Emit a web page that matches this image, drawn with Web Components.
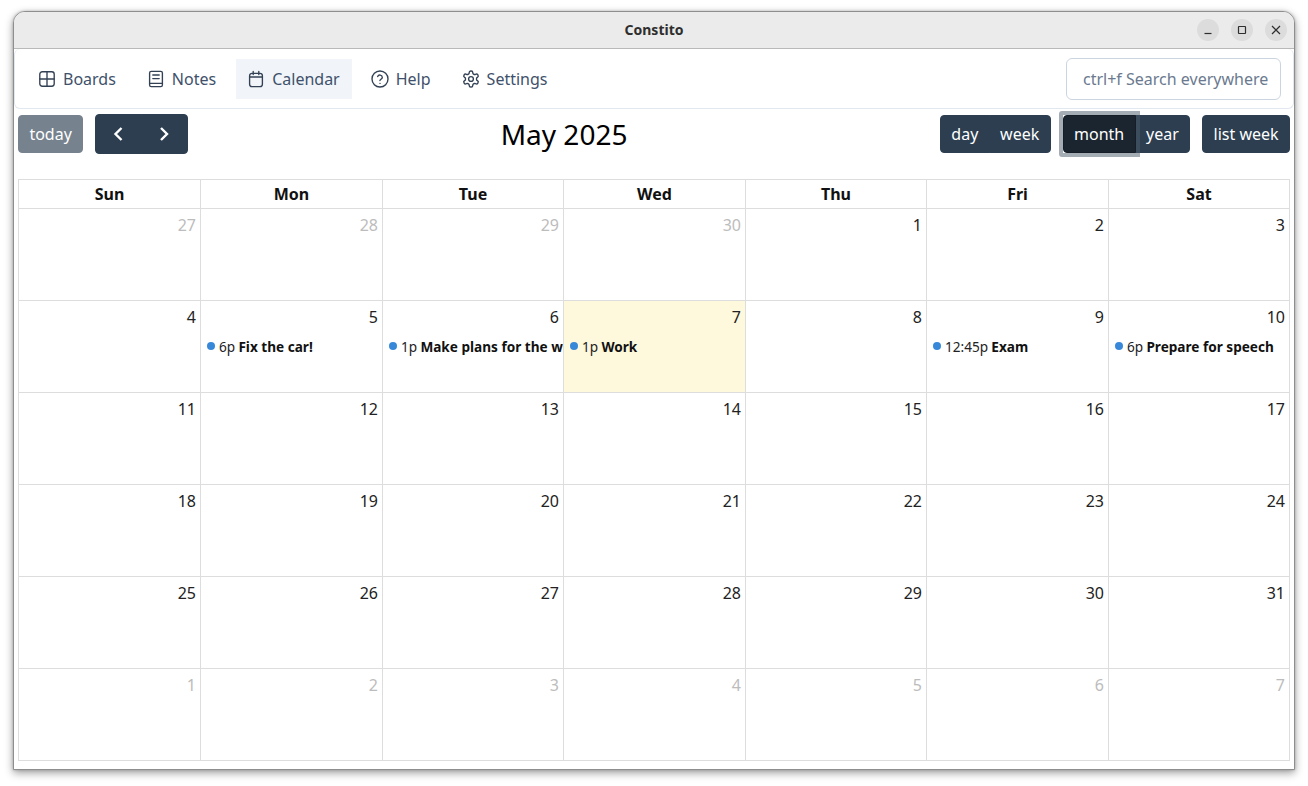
<!DOCTYPE html>
<html>
<head>
<meta charset="utf-8">
<title>Constito</title>
<style>
  html, body { margin: 0; background: #fff; }
  body { font-family: "Noto Sans", sans-serif; }
</style>
</head>
<body>
<app-window>
  <window-bar title-text="Constito"></window-bar>
  <nav-bar></nav-bar>
  <cal-page></cal-page>
</app-window>

<script>
const ICONS = {
  boards: `<rect x="3" y="3" width="18" height="18" rx="3"/><path d="M3 12h18M12 3v18"/>`,
  notes: `<path d="M6 2.5h12a2 2 0 0 1 2 2v15a2 2 0 0 1-2 2H6a2 2 0 0 1-2-2v-15a2 2 0 0 1 2-2z"/><path d="M4 17.5h16M8 7h8M8 11.5h8"/>`,
  calendar: `<rect x="4" y="5" width="16" height="16.5" rx="3"/><path d="M8.5 2.5v4M15.5 2.5v4M4 9.5h16"/>`,
  help: `<circle cx="12" cy="12" r="10"/><path d="M9.1 9a3 3 0 0 1 5.8 1c0 2-3 2.6-3 4"/><path d="M12 17.5h.01"/>`,
  settings: `<path d="M12.22 2h-.44a2 2 0 0 0-2 2v.18a2 2 0 0 1-1 1.73l-.43.25a2 2 0 0 1-2 0l-.15-.08a2 2 0 0 0-2.73.73l-.22.38a2 2 0 0 0 .73 2.73l.15.1a2 2 0 0 1 1 1.72v.51a2 2 0 0 1-1 1.74l-.15.09a2 2 0 0 0-.73 2.73l.22.38a2 2 0 0 0 2.73.73l.15-.08a2 2 0 0 1 2 0l.43.25a2 2 0 0 1 1 1.73V20a2 2 0 0 0 2 2h.44a2 2 0 0 0 2-2v-.18a2 2 0 0 1 1-1.73l.43-.25a2 2 0 0 1 2 0l.15.08a2 2 0 0 0 2.73-.73l.22-.39a2 2 0 0 0-.73-2.73l-.15-.08a2 2 0 0 1-1-1.74v-.5a2 2 0 0 1 1-1.74l.15-.09a2 2 0 0 0 .73-2.73l-.22-.38a2 2 0 0 0-2.73-.73l-.15.08a2 2 0 0 1-2 0l-.43-.25a2 2 0 0 1-1-1.73V4a2 2 0 0 0-2-2z"/><circle cx="12" cy="12" r="3"/>`,
};

class AppWindow extends HTMLElement {
  constructor() {
    super();
    this.attachShadow({ mode: "open" });
  }

  connectedCallback() {
    this.shadowRoot.innerHTML = /*html*/ `
      <style>
        :host {
          display: flex;
          flex-direction: column;
          box-sizing: border-box;
          height: 759px;
          margin: 11px 13px 16px;
          background: #fff;
          border: 1px solid #8e8e8e;
          border-radius: 12px 12px 0 0;
          box-shadow: 0 3px 9px rgba(0, 0, 0, 0.38), 0 0 3px rgba(0, 0, 0, 0.2);
        }
      </style>
      <slot></slot>
    `;
  }
}

class WindowBar extends HTMLElement {
  constructor() {
    super();
    this.attachShadow({ mode: "open" });
  }

  connectedCallback() {
    this.shadowRoot.innerHTML = /*html*/ `
      <style>
        :host {
          display: grid;
          grid-template-columns: 1fr auto 1fr;
          align-items: center;
          height: 36px;
          background: #ebebeb;
          border-bottom: 1px solid #b9b9b9;
          border-radius: 11px 11px 0 0;
          color: #2e2e2e;
          font: 700 14px "Noto Sans", sans-serif;
        }
        .title { grid-column: 2; padding-bottom: 2px; }
        .controls { grid-column: 3; display: flex; justify-content: flex-end; gap: 12px; padding-right: 7px; }
        .ctl {
          width: 22px;
          height: 22px;
          border-radius: 50%;
          background: #dcdcdc;
          display: flex;
          align-items: center;
          justify-content: center;
        }
        svg { width: 16px; height: 16px; fill: none; stroke: #2e2e2e; stroke-width: 1.2; }
      </style>
      <span class="title">${this.getAttribute("title-text")}</span>
      <div class="controls">
        <div class="ctl"><svg viewBox="0 0 16 16"><path d="M4.5 11.5h7"/></svg></div>
        <div class="ctl"><svg viewBox="0 0 16 16"><rect x="4.5" y="4.5" width="7" height="7" rx=".5"/></svg></div>
        <div class="ctl"><svg viewBox="0 0 16 16"><path d="M4 4l8 8M12 4l-8 8"/></svg></div>
      </div>
    `;
  }
}

class NavItem extends HTMLElement {
  constructor() {
    super();
    this.attachShadow({ mode: "open" });
  }

  connectedCallback() {
    const icon = ICONS[this.getAttribute("icon")];
    this.shadowRoot.innerHTML = /*html*/ `
      <style>
        :host {
          display: flex;
          align-items: center;
          gap: 8px;
          height: 40px;
          padding: 0 12px;
          color: #40516b;
          font-size: 16px;
        }
        :host([active]) { background: #f1f5f9; }
        svg {
          width: 16px;
          height: 16px;
          fill: none;
          stroke: #334155;
          stroke-width: 1.7;
          stroke-linecap: round;
          stroke-linejoin: round;
          overflow: visible;
        }
      </style>
      <svg viewBox="2 2 20 20">${icon}</svg>
      <slot></slot>
    `;
  }
}

class NavBar extends HTMLElement {
  constructor() {
    super();
    this.attachShadow({ mode: "open" });
  }

  connectedCallback() {
    this.shadowRoot.innerHTML = /*html*/ `
      <style>
        :host {
          display: flex;
          align-items: center;
          gap: 8px;
          box-sizing: border-box;
          height: 60px;
          padding: 0 12px;
          border: 1px solid #e2e8f0;
          border-top: 0;
          border-radius: 6px;
          font-family: "Noto Sans", sans-serif;
        }
        .search {
          margin-left: auto;
          box-sizing: border-box;
          width: 215px;
          height: 42px;
          padding: 0 12px 0 16px;
          border: 1px solid #cbd5e1;
          border-radius: 6px;
          background: #fff;
          font: 16px "Noto Sans", sans-serif;
          outline: none;
        }
        .search::placeholder { color: #6b7a8f; opacity: 1; }
      </style>
      <nav-item icon="boards">Boards</nav-item>
      <nav-item icon="notes">Notes</nav-item>
      <nav-item icon="calendar" active>Calendar</nav-item>
      <nav-item icon="help">Help</nav-item>
      <nav-item icon="settings">Settings</nav-item>
      <input class="search" placeholder="ctrl+f Search everywhere">
    `;
  }
}

class CalToolbar extends HTMLElement {
  constructor() {
    super();
    this.attachShadow({ mode: "open" });
  }

  connectedCallback() {
    this.shadowRoot.innerHTML = /*html*/ `
      <style>
        :host {
          display: flex;
          justify-content: space-between;
          align-items: center;
          height: 40px;
          margin: 5px 0 25px;
        }
        .chunk { display: flex; align-items: center; gap: 12px; }
        h2 { margin: 0; font-size: 28px; font-weight: 400; line-height: 40px; color: #000; }
        .group { display: flex; align-items: center; }
        button {
          position: relative;
          box-sizing: border-box;
          height: 38px;
          padding: 0 10.4px;
          margin: 0;
          border: 1px solid #2c3e50;
          border-radius: 4px;
          background: #2c3e50;
          color: #fff;
          font: 16px/24px "Noto Sans", sans-serif;
        }
        .group button:not(:first-child) { border-top-left-radius: 0; border-bottom-left-radius: 0; margin-left: -1px; }
        .group button:not(:last-child) { border-top-right-radius: 0; border-bottom-right-radius: 0; }
        .today { background: #76828d; border-color: #76828d; }
        .arrow { width: 47px; height: 40px; display: flex; align-items: center; justify-content: center; padding: 0; }
        .arrow svg { width: 24px; height: 24px; fill: none; stroke: #fff; stroke-width: 2.4; }
        .current { z-index: 1; background: #1a252f; border-color: #151e27; }
        /* focus ring sits over the year button too */
        .current::after {
          content: "";
          position: absolute;
          inset: -5px;
          border: 4px solid rgba(76, 91, 106, 0.5);
          border-radius: 3px 0 0 3px;
        }
      </style>
      <div class="chunk">
        <button class="today">today</button>
        <div class="group">
          <button class="arrow" aria-label="prev"><svg viewBox="0 0 24 24"><path d="M14.5 6 8.5 12l6 6"/></svg></button>
          <button class="arrow" aria-label="next"><svg viewBox="0 0 24 24"><path d="M8 6l6 6-6 6"/></svg></button>
        </div>
      </div>
      <h2>May 2025</h2>
      <div class="chunk">
        <div class="group">
          <button>day</button>
          <button>week</button>
        </div>
        <div class="group">
          <button class="current">month</button>
          <button>year</button>
        </div>
        <button>list week</button>
      </div>
    `;
  }
}

class CalEvent extends HTMLElement {
  constructor() {
    super();
    this.attachShadow({ mode: "open" });
  }

  connectedCallback() {
    this.shadowRoot.innerHTML = /*html*/ `
      <style>
        :host {
          display: flex;
          align-items: center;
          height: 20px;
          margin-top: 7px;
          padding-left: 6px;
          white-space: nowrap;
          overflow: hidden;
          font-size: 13.6px;
          color: #222;
        }
        i {
          flex: none;
          width: 8px;
          height: 8px;
          margin-right: 4px;
          border-radius: 50%;
          background: #3788d8;
        }
        b { margin-left: 3.25px; font-weight: 700; color: #111; }
      </style>
      <i></i><span>${this.getAttribute("time")}</span><b><slot></slot></b>
    `;
  }
}

class CalDay extends HTMLElement {
  constructor() {
    super();
    this.attachShadow({ mode: "open" });
  }

  connectedCallback() {
    this.shadowRoot.innerHTML = /*html*/ `
      <style>
        :host {
          display: block;
          min-width: 0;
          overflow: hidden;
          border-left: 1px solid #ddd;
          border-top: 1px solid #ddd;
        }
        :host([today]) { background: #fef8dd; }
        .num { padding: 4px 4px 0; text-align: right; font-size: 16px; line-height: 24px; color: #222; }
        :host([other]) .num { color: #bcbcbc; }
      </style>
      <div class="num">${this.getAttribute("num")}</div>
      <slot></slot>
    `;
  }
}

const WEEKDAYS = ["Sun", "Mon", "Tue", "Wed", "Thu", "Fri", "Sat"];
const DAYS = [
  [27, 1], [28, 1], [29, 1], [30, 1], [1], [2], [3],
  [4], [5], [6], [7], [8], [9], [10],
  [11], [12], [13], [14], [15], [16], [17],
  [18], [19], [20], [21], [22], [23], [24],
  [25], [26], [27], [28], [29], [30], [31],
  [1, 1], [2, 1], [3, 1], [4, 1], [5, 1], [6, 1], [7, 1],
];
const EVENTS = {
  5: ["6p", "Fix the car!"],
  6: ["1p", "Make plans for the week"],
  7: ["1p", "Work"],
  9: ["12:45p", "Exam"],
  10: ["6p", "Prepare for speech"],
};

class MonthGrid extends HTMLElement {
  constructor() {
    super();
    this.attachShadow({ mode: "open" });
  }

  connectedCallback() {
    const heads = WEEKDAYS.map((d) => `<div class="head">${d}</div>`).join("");
    const cells = DAYS.map(([num, other]) => {
      const ev = !other && EVENTS[num];
      const inner = ev ? `<cal-event time="${ev[0]}">${ev[1]}</cal-event>` : "";
      return `<cal-day num="${num}"${other ? " other" : ""}${!other && num === 7 ? " today" : ""}>${inner}</cal-day>`;
    }).join("");
    this.shadowRoot.innerHTML = /*html*/ `
      <style>
        :host {
          display: grid;
          grid-template-columns: 182px 182px 181px 182px 181px 182px 181px;
          grid-template-rows: 29px repeat(6, 92px);
          width: 1272px;
          box-sizing: border-box;
          border-right: 1px solid #ddd;
          border-bottom: 1px solid #ddd;
        }
        .head {
          display: flex;
          align-items: center;
          justify-content: center;
          border-left: 1px solid #ddd;
          border-top: 1px solid #ddd;
          font-weight: 700;
          font-size: 16px;
          color: #111;
        }
      </style>
      ${heads}${cells}
    `;
  }
}

class CalPage extends HTMLElement {
  constructor() {
    super();
    this.attachShadow({ mode: "open" });
  }

  connectedCallback() {
    this.shadowRoot.innerHTML = /*html*/ `
      <style>
        :host { display: block; padding: 0 4px; font-family: "Noto Sans", sans-serif; }
      </style>
      <cal-toolbar></cal-toolbar>
      <month-grid></month-grid>
    `;
  }
}

customElements.define("app-window", AppWindow);
customElements.define("window-bar", WindowBar);
customElements.define("nav-item", NavItem);
customElements.define("nav-bar", NavBar);
customElements.define("cal-toolbar", CalToolbar);
customElements.define("cal-event", CalEvent);
customElements.define("cal-day", CalDay);
customElements.define("month-grid", MonthGrid);
customElements.define("cal-page", CalPage);
</script>
</body>
</html>
